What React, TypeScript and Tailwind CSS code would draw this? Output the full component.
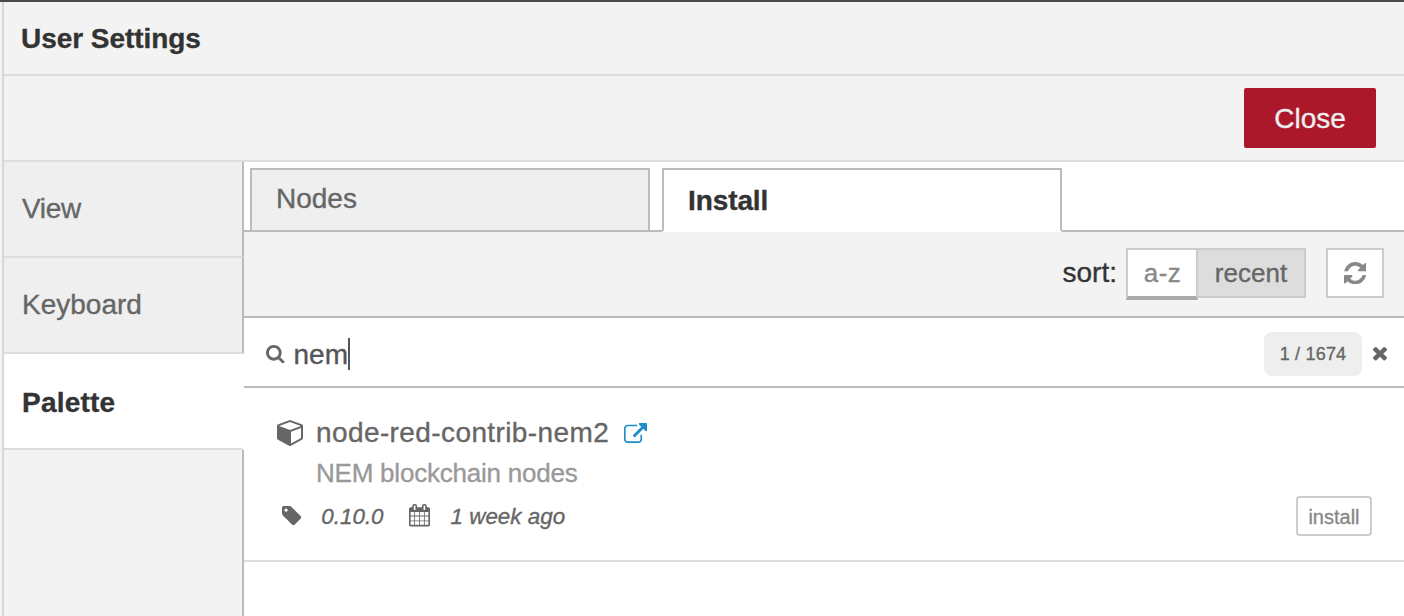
import React from 'react';

type IconProps = { viewBox: string; d: string; className: string };

function Icon({ viewBox, d, className }: IconProps) {
  return (
    <svg viewBox={viewBox} preserveAspectRatio="none" fill="currentColor" aria-hidden="true" className={`block shrink-0 ${className}`}>
      <path d={d} />
    </svg>
  );
}

const paths = {
  cube: 'M896 1629l640-349v-636l-640 233v752zm-64-865l698-254-698-254-698 254 698 254zm832-252v768q0 35-18 65t-49 47l-704 384q-28 16-61 16t-61-16l-704-384q-31-17-49-47t-18-65v-768q0-40 23-73t61-47l704-256q22-8 44-8t44 8l704 256q38 14 61 47t23 73z',
  tag: 'M576 448q0-53-37.5-90.5t-90.5-37.5-90.5 37.5-37.5 90.5 37.5 90.5 90.5 37.5 90.5-37.5 37.5-90.5zm1067 576q0 53-37 90l-491 492q-39 37-91 37-53 0-90-37l-715-716q-38-37-64.5-101t-26.5-117v-416q0-52 38-90t90-38h416q53 0 117 26.5t102 64.5l715 714q37 39 37 91z',
  calendar: 'M192 1664h288v-288h-288v288zm352 0h320v-288h-320v288zm-352-352h288v-320h-288v320zm352 0h320v-320h-320v320zm-352-384h288v-288h-288v288zm736 736h320v-288h-320v288zm-384-736h320v-288h-320v288zm768 736h288v-288h-288v288zm-384-352h320v-320h-320v320zm-352-864v-288q0-13-9.5-22.5t-22.5-9.5h-64q-13 0-22.5 9.5t-9.5 22.5v288q0 13 9.5 22.5t22.5 9.5h64q13 0 22.5-9.5t9.5-22.5zm736 864h288v-320h-288v320zm-384-384h320v-288h-320v288zm384 0h288v-288h-288v288zm32-480v-288q0-13-9.5-22.5t-22.5-9.5h-64q-13 0-22.5 9.5t-9.5 22.5v288q0 13 9.5 22.5t22.5 9.5h64q13 0 22.5-9.5t9.5-22.5zm384-64v1280q0 52-38 90t-90 38h-1408q-52 0-90-38t-38-90v-1280q0-52 38-90t90-38h128v-96q0-66 47-113t113-47h64q66 0 113 47t47 113v96h384v-96q0-66 47-113t113-47h64q66 0 113 47t47 113v96h128q52 0 90 38t38 90z',
  external: 'M1408 928v320q0 119-84.5 203.5t-203.5 84.5h-832q-119 0-203.5-84.5t-84.5-203.5v-832q0-119 84.5-203.5t203.5-84.5h704q14 0 23 9t9 23v64q0 14-9 23t-23 9h-704q-66 0-113 47t-47 113v832q0 66 47 113t113 47h832q66 0 113-47t47-113v-320q0-14 9-23t23-9h64q14 0 23 9t9 23zm384-864v512q0 26-19 45t-45 19-45-19l-176-176-652 652q-10 10-23 10t-23-10l-114-114q-10-10-10-23t10-23l652-652-176-176q-19-19-19-45t19-45 45-19h512q26 0 45 19t19 45z',
  refresh: 'M1639 1056q0 5-1 7-64 268-268 434.5t-478 166.5q-146 0-282.5-55t-243.5-157l-129 129q-19 19-45 19t-45-19-19-45v-448q0-26 19-45t45-19h448q26 0 45 19t19 45-19 45l-137 137q71 66 161 102t187 36q134 0 250-65t186-179q11-17 53-117 8-23 30-23h192q13 0 22.5 9.5t9.5 22.5zm25-800v448q0 26-19 45t-45 19h-448q-26 0-45-19t-19-45 19-45l138-138q-148-137-349-137-134 0-250 65t-186 179q-11 17-53 117-8 23-30 23h-199q-13 0-22.5-9.5t-9.5-22.5v-7q65-268 270-434.5t480-166.5q146 0 284 55.5t245 156.5l130-129q19-19 45-19t45 19 19 45z',
  search: 'M1216 832q0-185-131.5-316.5t-316.5-131.5-316.5 131.5-131.5 316.5 131.5 316.5 316.5 131.5 316.5-131.5 131.5-316.5zm512 832q0 52-38 90t-90 38q-54 0-90-38l-343-342q-179 124-399 124-143 0-273.5-55.5t-225-150-150-225-55.5-273.5 55.5-273.5 150-225 225-150 273.5-55.5 273.5 55.5 225 150 150 225 55.5 273.5q0 220-124 399l343 343q37 37 37 90z',
  times: 'M1490 1322q0 40-28 68l-136 136q-28 28-68 28t-68-28l-294-294-294 294q-28 28-68 28t-68-28l-136-136q-28-28-28-68t28-68l294-294-294-294q-28-28-28-68t28-68l136-136q28-28 68-28t68 28l294 294 294-294q28-28 68-28t68 28l136 136q28 28 28 68t-28 68l-294 294 294 294q28 28 28 68z',
};

function Sidebar() {
  return (
    <nav className="flex w-60 shrink-0 flex-col">
      <button className="flex h-24 items-center border-b-2 border-r-2 border-b-[#ddd] border-r-[#bbb] bg-[#efefef] pl-[18px] tracking-[-0.3px] text-[#666]">View</button>
      <button className="flex h-24 items-center border-b-2 border-r-2 border-b-[#ddd] border-r-[#bbb] bg-[#efefef] pl-[18px] text-[#666]">Keyboard</button>
      <button className="flex h-24 items-center border-b-2 border-r-2 border-b-[#ddd] border-r-white bg-white pl-[18px] pt-1 font-bold tracking-[0.2px]">Palette</button>
      <div className="grow border-r-2 border-[#bbb]" />
    </nav>
  );
}

function Tabs() {
  return (
    <div className="flex h-[70px] items-end bg-white">
      <div className="h-full w-1.5 border-b-2 border-[#bbb]" />
      <button className="flex h-16 w-[400px] items-center border-2 border-[#bbb] bg-[#efefef] pb-0.5 pl-6 text-[#666]">Nodes</button>
      <div className="h-full w-3 border-b-2 border-[#bbb]" />
      <button className="flex h-16 w-[400px] items-center border-2 border-[#bbb] border-b-white bg-white pl-6 pt-0.5 font-bold tracking-[-0.1px]">Install</button>
      <div className="h-full grow border-b-2 border-[#bbb]" />
    </div>
  );
}

function SortBar() {
  return (
    <div className="flex h-[86px] items-start justify-end border-b-2 border-[#bbb] bg-[#f3f3f3] pr-5 pt-4">
      <span className="mr-[9px] leading-[50px]">sort:</span>
      <button className="h-[52px] w-[72px] border-2 border-b-4 border-[#ccc] border-b-[#aaa] bg-white pl-px text-[26px] leading-[46px] tracking-[0.4px] text-[#888]">a-z</button>
      <button className="h-[50px] w-[108px] border-2 border-l-0 border-[#ccc] bg-[#ddd] text-[26px] leading-[46px] text-[#666]">recent</button>
      <button className="ml-5 flex h-[50px] w-[58px] items-center justify-center border-2 border-[#ccc] bg-white text-[#888]" aria-label="Refresh">
        <Icon viewBox="128 128 1536 1536" d={paths.refresh} className="size-[22.4px]" />
      </button>
    </div>
  );
}

function SearchBar() {
  return (
    <div className="flex h-[70px] items-center border-b-2 border-[#bbb] bg-white pl-[22px] pr-[17px] pt-1 text-[#666]">
      <Icon viewBox="64 128 1664 1664" d={paths.search} className="size-[18.5px]" />
      <span className="ml-[9px] pt-px text-[#555]">nem</span>
      <span className="h-8 w-0.5 bg-[#555]" />
      <span className="ml-auto flex h-11 w-[98px] items-center justify-center rounded-lg bg-[#eee] text-[18px] tracking-[0.2px]">1 / 1674</span>
      <Icon viewBox="302 366 1188 1188" d={paths.times} className="ml-[11px] h-[13.5px] w-[14px]" />
    </div>
  );
}

function ModuleRow() {
  return (
    <div className="flex h-[174px] items-end justify-between border-b-2 border-[#ddd] bg-white pb-6 pr-8 text-[#666]">
      <div className="flex h-full flex-col pl-[33px] pt-[25px]">
        <div className="flex h-[42px] items-center">
          <Icon viewBox="0 128 1664 1664" d={paths.cube} className="size-[26px]" />
          <span className="ml-[13px] tracking-[0.4px]">node-red-contrib-nem2</span>
          <Icon viewBox="0 0 1792 1536" d={paths.external} className="ml-[15px] h-5 w-[23px] text-[#1c8ccb]" />
        </div>
        <div className="h-10 pl-[39px] text-[26px] leading-[38px] tracking-[-0.22px] text-[#999]">NEM blockchain nodes</div>
        <div className="flex h-[45px] items-center pl-[5px] pt-[3px] text-[22.4px] italic">
          <Icon viewBox="128 128 1515 1515" d={paths.tag} className="size-[19.3px]" />
          <span className="ml-5 pt-1">0.10.0</span>
          <Icon viewBox="64 0 1664 1792" d={paths.calendar} className="ml-[25px] h-[22.4px] w-[21px]" />
          <span className="ml-[21px] pt-1">1 week ago</span>
        </div>
      </div>
      <button className="h-10 w-[76px] rounded border-2 border-[#ccc] text-[20px] leading-[38px] text-[#888]">install</button>
    </div>
  );
}

export default function App() {
  return (
    <div className="flex h-[616px] w-[1404px] flex-col overflow-hidden border-t-2 border-[#4b4a4b] bg-[#f3f3f3] pl-0.5 font-['Liberation_Sans',Arial,sans-serif] text-[28px] leading-none text-[#333] [-webkit-text-stroke:0.35px]">
      <div className="flex grow flex-col border-l-2 border-[#d8d8d8]">
        <header className="flex h-[74px] shrink-0 items-center border-b-2 border-[#ddd] pl-[17px] pt-0.5 font-bold tracking-[-0.05px]">User Settings</header>
        <div className="flex h-[86px] shrink-0 items-center justify-end border-b-2 border-[#ddd] pr-7">
          <button className="h-[60px] w-[132px] rounded-xs bg-[#ab182a] pt-0.5 text-[#eee]">Close</button>
        </div>
        <div className="flex grow">
          <Sidebar />
          <main className="flex grow flex-col bg-white">
            <Tabs />
            <SortBar />
            <SearchBar />
            <ModuleRow />
          </main>
        </div>
      </div>
    </div>
  );
}
